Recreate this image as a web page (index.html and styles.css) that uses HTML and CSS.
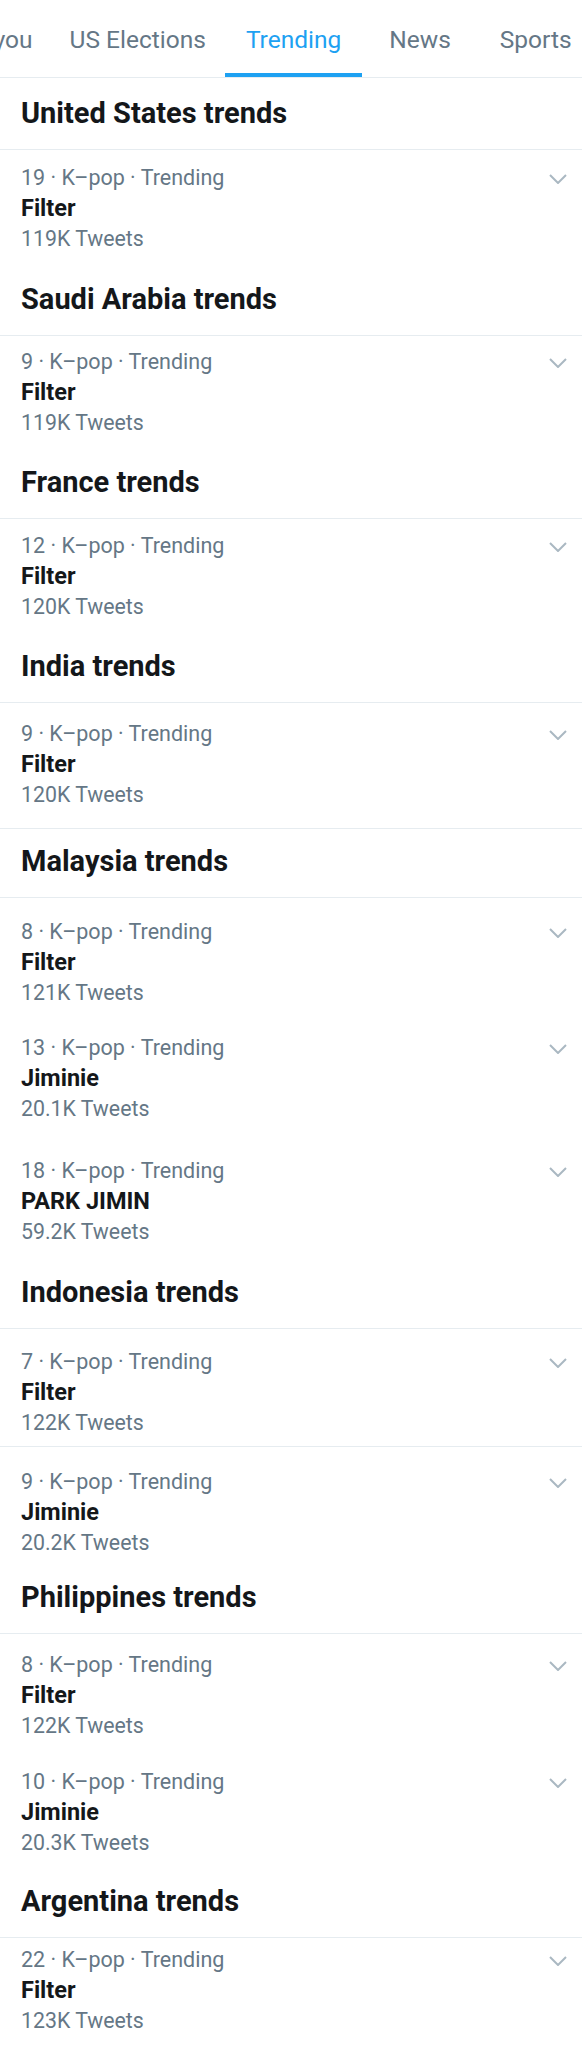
FILE: index.html
```html
<!DOCTYPE html>
<html lang="en">
<head>
<meta charset="utf-8">
<title>Trending</title>
<link rel="stylesheet" href="styles.css">
</head>
<body>
<nav class="tabs">
  <div class="tab tab-foryou">For you</div>
  <div class="tab tab-us">US Elections</div>
  <div class="tab tab-trending active">Trending</div>
  <div class="tab tab-news">News</div>
  <div class="tab tab-sports">Sports</div>
</nav>

<section class="sec">
  <h2 class="sec-head">United States trends</h2>
  <div class="trend pt13 pb10">
    <div class="info"><div class="meta">19 · K–pop · Trending</div><div class="name">Filter</div><div class="count">119K Tweets</div></div>
    <svg class="chev" viewBox="0 0 18 10"><path d="M1 1l8 8 8-8"/></svg>
  </div>
</section>

<section class="sec">
  <h2 class="sec-head">Saudi Arabia trends</h2>
  <div class="trend pt11 pb9">
    <div class="info"><div class="meta">9 · K–pop · Trending</div><div class="name">Filter</div><div class="count">119K Tweets</div></div>
    <svg class="chev" viewBox="0 0 18 10"><path d="M1 1l8 8 8-8"/></svg>
  </div>
</section>

<section class="sec">
  <h2 class="sec-head">France trends</h2>
  <div class="trend pt12 pb9">
    <div class="info"><div class="meta">12 · K–pop · Trending</div><div class="name">Filter</div><div class="count">120K Tweets</div></div>
    <svg class="chev" viewBox="0 0 18 10"><path d="M1 1l8 8 8-8"/></svg>
  </div>
</section>

<section class="sec">
  <h2 class="sec-head">India trends</h2>
  <div class="trend pt16 pb18 ruled">
    <div class="info"><div class="meta">9 · K–pop · Trending</div><div class="name">Filter</div><div class="count">120K Tweets</div></div>
    <svg class="chev" viewBox="0 0 18 10"><path d="M1 1l8 8 8-8"/></svg>
  </div>
</section>

<section class="sec">
  <h2 class="sec-head after-rule">Malaysia trends</h2>
  <div class="trend pt19 pb12">
    <div class="info"><div class="meta">8 · K–pop · Trending</div><div class="name">Filter</div><div class="count">121K Tweets</div></div>
    <svg class="chev" viewBox="0 0 18 10"><path d="M1 1l8 8 8-8"/></svg>
  </div>
  <div class="trend pt13 pb16">
    <div class="info"><div class="meta">13 · K–pop · Trending</div><div class="name">Jiminie</div><div class="count">20.1K Tweets</div></div>
    <svg class="chev" viewBox="0 0 18 10"><path d="M1 1l8 8 8-8"/></svg>
  </div>
  <div class="trend pt16 pb10">
    <div class="info"><div class="meta">18 · K–pop · Trending</div><div class="name">PARK JIMIN</div><div class="count">59.2K Tweets</div></div>
    <svg class="chev" viewBox="0 0 18 10"><path d="M1 1l8 8 8-8"/></svg>
  </div>
</section>

<section class="sec">
  <h2 class="sec-head">Indonesia trends</h2>
  <div class="trend pt18 pb8 ruled">
    <div class="info"><div class="meta">7 · K–pop · Trending</div><div class="name">Filter</div><div class="count">122K Tweets</div></div>
    <svg class="chev" viewBox="0 0 18 10"><path d="M1 1l8 8 8-8"/></svg>
  </div>
  <div class="trend pt20 pb4">
    <div class="info"><div class="meta">9 · K–pop · Trending</div><div class="name">Jiminie</div><div class="count">20.2K Tweets</div></div>
    <svg class="chev" viewBox="0 0 18 10"><path d="M1 1l8 8 8-8"/></svg>
  </div>
</section>

<section class="sec">
  <h2 class="sec-head">Philippines trends</h2>
  <div class="trend pt16 pb13">
    <div class="info"><div class="meta">8 · K–pop · Trending</div><div class="name">Filter</div><div class="count">122K Tweets</div></div>
    <svg class="chev" viewBox="0 0 18 10"><path d="M1 1l8 8 8-8"/></svg>
  </div>
  <div class="trend pt13 pb8">
    <div class="info"><div class="meta">10 · K–pop · Trending</div><div class="name">Jiminie</div><div class="count">20.3K Tweets</div></div>
    <svg class="chev" viewBox="0 0 18 10"><path d="M1 1l8 8 8-8"/></svg>
  </div>
</section>

<section class="sec">
  <h2 class="sec-head">Argentina trends</h2>
  <div class="trend pt7 pb10">
    <div class="info"><div class="meta">22 · K–pop · Trending</div><div class="name">Filter</div><div class="count">123K Tweets</div></div>
    <svg class="chev" viewBox="0 0 18 10"><path d="M1 1l8 8 8-8"/></svg>
  </div>
</section>
</body>
</html>
```

FILE: styles.css
```css
* { box-sizing: border-box; }
html, body {
  margin: 0;
  padding: 0;
  background: #ffffff;
  font-family: Roboto, "Noto Sans", "Liberation Sans", sans-serif;
  overflow: hidden;
}

.tabs {
  display: flex;
  align-items: center;
  height: 78px;
  border-bottom: 1px solid #e6ecf0;
  white-space: nowrap;
  overflow: hidden;
}
.tab {
  position: relative;
  flex: none;
  font-size: 24.5px;
  color: #657786;
  line-height: 30px;
  padding-top: 3px;
}
.tab-foryou { margin-left: -48px; }
.tab-us { margin-left: 37px; }
.tab-trending { margin-left: 40px; }
.tab-news { margin-left: 48px; }
.tab-sports { margin-left: 49px; }
.tab.active { color: #1da1f2; }
.tab.active::after {
  content: "";
  position: absolute;
  left: -21px;
  right: -21px;
  top: 51px;
  height: 4px;
  background: #1da1f2;
}

.sec-head {
  margin: 0;
  padding: 17px 21px 18px;
  font-size: 29px;
  line-height: 36px;
  font-weight: 700;
  color: #14171a;
  border-bottom: 1px solid #e6ecf0;
}
.sec-head.after-rule { padding-top: 14px; }

.trend {
  display: flex;
  align-items: flex-start;
  justify-content: space-between;
  padding-left: 21px;
  padding-right: 15px;
}
.trend.ruled { border-bottom: 1px solid #e6ecf0; }
.info { display: flex; flex-direction: column; }
.meta {
  font-size: 21.5px;
  line-height: 30px;
  color: #657786;
}
.name {
  font-size: 23.5px;
  line-height: 31px;
  font-weight: 700;
  color: #14171a;
}
.count {
  font-size: 21.3px;
  line-height: 30px;
  color: #657786;
}
.chev {
  width: 18px;
  height: 10px;
  margin-top: 11px;
  fill: none;
  stroke: #aab8c2;
  stroke-width: 2;
}

.pt7 { padding-top: 7px; }
.pt11 { padding-top: 11px; }
.pt12 { padding-top: 12px; }
.pt13 { padding-top: 13px; }
.pt16 { padding-top: 16px; }
.pt18 { padding-top: 18px; }
.pt19 { padding-top: 19px; }
.pt20 { padding-top: 20px; }
.pb4 { padding-bottom: 4px; }
.pb8 { padding-bottom: 8px; }
.pb9 { padding-bottom: 9px; }
.pb10 { padding-bottom: 10px; }
.pb12 { padding-bottom: 12px; }
.pb13 { padding-bottom: 13px; }
.pb16 { padding-bottom: 16px; }
.pb18 { padding-bottom: 18px; }
```
